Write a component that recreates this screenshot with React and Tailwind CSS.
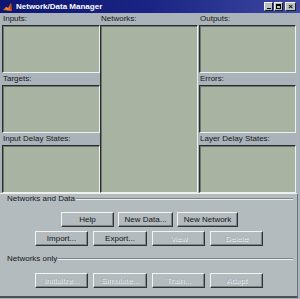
import React from 'react';

const ListBox = ({ className = '' }) => (
  <div
    className={`bg-[#a8b3a1] border border-t-[#2a2c2c] border-l-[#2a2c2c] border-b-[#eef0f0] border-r-[#eef0f0] shadow-[inset_1px_1px_0_#6e7670] ${className}`}
  />
);

const Band = ({ label }) => (
  <div className="h-[12px] flex items-center pl-[1px] text-[#161818] leading-none">{label}</div>
);

const Pane = ({ label }) => (
  <>
    <Band label={label} />
    <ListBox className="h-[48px]" />
  </>
);

const Btn = ({ label, width = 'w-[53px]', disabled = false }) => (
  <div
    className={`${width} h-[15px] flex items-center justify-center bg-[#b3bbbf] border border-t-[#f2f4f4] border-l-[#f2f4f4] border-b-[#303434] border-r-[#303434] shadow-[inset_-1px_-1px_0_#7c8488] leading-none ${
      disabled ? 'text-[#aab1b5] [text-shadow:1px_1px_0_#eef0f2]' : 'text-[#121414]'
    }`}
  >
    {label}
  </div>
);

const GroupHeader = ({ label }) => (
  <div className="flex items-center pl-[7px] pr-[4px] h-[10px]">
    <span className="text-[#161818] leading-none whitespace-nowrap">{label}</span>
    <div className="flex-1 ml-[1px] border-t border-t-[#7c8488] border-b border-b-[#eef0f0]" />
  </div>
);

const WinBtn = ({ children, className = '' }) => (
  <div
    className={`w-[9px] h-[9px] bg-[#b8c0c4] border border-t-[#f2f4f4] border-l-[#f2f4f4] border-b-[#202020] border-r-[#202020] flex items-center justify-center ${className}`}
  >
    {children}
  </div>
);

export default function App() {
  return (
    <div
      className="w-[300px] h-[299px] bg-[#aab2ba] flex flex-col overflow-hidden text-[8px]"
      style={{ fontFamily: '"Liberation Sans", Arial, sans-serif' }}
    >
      {/* Title bar */}
      <div className="h-[13px] flex items-center bg-gradient-to-r from-[#0e1672] via-[#1a2484] to-[#3e48a2] pl-[2px] pr-[4px]">
        <svg width="11" height="10" viewBox="0 0 11 10" className="mr-[3px]">
          <path d="M1 8 L4 5 L6 6 L9 1 L10 9 Z" fill="#e8701c" />
          <path d="M4 5 L6 6 L5 8 Z" fill="#f0b040" />
          <path d="M9 1 L10 9 L8 7 Z" fill="#b83010" />
        </svg>
        <span className="text-white font-bold leading-none">Network/Data Manager</span>
        <div className="flex-1" />
        <WinBtn>
          <div className="w-[4px] h-[1px] bg-black mt-[4px]" />
        </WinBtn>
        <WinBtn className="ml-[1px]">
          <div className="w-[5px] h-[5px] border border-black border-t-2" />
        </WinBtn>
        <WinBtn className="ml-[2px] w-[11px]">
          <span className="text-black font-bold text-[8px] leading-none">×</span>
        </WinBtn>
      </div>

      {/* Lists */}
      <div className="flex pl-[2px] h-[180px]">
        <div className="w-[98px] flex flex-col">
          <Pane label="Inputs:" />
          <Pane label="Targets:" />
          <Pane label="Input Delay States:" />
        </div>
        <div className="w-[98px] flex flex-col">
          <Band label="Networks:" />
          <ListBox className="flex-1" />
        </div>
        <div className="w-[98px] flex flex-col pl-[1px]">
          <Pane label="Outputs:" />
          <Pane label="Errors:" />
          <Pane label="Layer Delay States:" />
        </div>
      </div>

      {/* Bottom panel */}
      <div className="flex-1 bg-[#b3bbbf] border-t border-t-[#eef0f0] border-b-2 border-b-[#4a5054] border-r border-r-[#6a7276] mr-[2px] mb-[1px] flex flex-col">
        <GroupHeader label="Networks and Data" />
        <div className="flex pl-[61px] gap-[4px] mt-[8px]">
          <Btn label="Help" />
          <Btn label="New Data..." width="w-[55px]" />
          <Btn label="New Network" width="w-[61px]" />
        </div>
        <div className="flex pl-[35px] gap-[5px] mt-[4px]">
          <Btn label="Import..." />
          <Btn label="Export..." width="w-[54px]" />
          <Btn label="View" disabled />
          <Btn label="Delete" disabled />
        </div>
        <div className="mt-[8px]">
          <GroupHeader label="Networks only" />
        </div>
        <div className="flex pl-[35px] gap-[5px] mt-[9px]">
          <Btn label="Initialize..." disabled />
          <Btn label="Simulate..." width="w-[54px]" disabled />
          <Btn label="Train..." disabled />
          <Btn label="Adapt" disabled />
        </div>
      </div>
    </div>
  );
}
